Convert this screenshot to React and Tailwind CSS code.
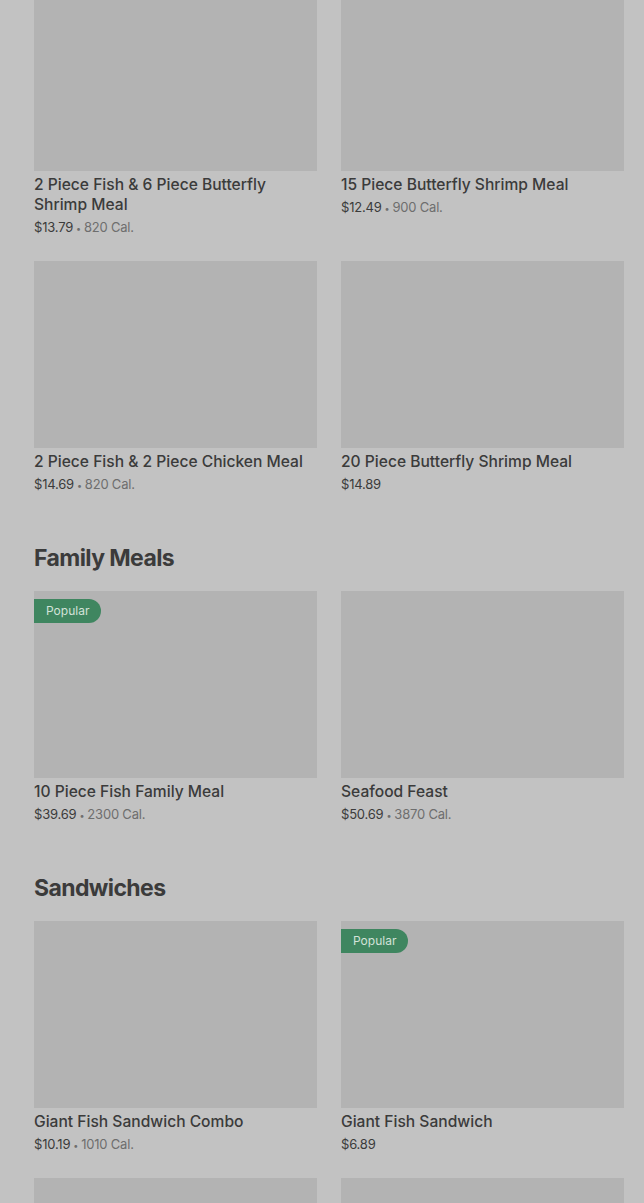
import React from "react";

const sections = [
  {
    title: null,
    items: [
      { name: "2 Piece Fish & 6 Piece Butterfly Shrimp Meal", price: "$13.79", cal: "820 Cal." },
      { name: "15 Piece Butterfly Shrimp Meal", price: "$12.49", cal: "900 Cal." },
      { name: "2 Piece Fish & 2 Piece Chicken Meal", price: "$14.69", cal: "820 Cal." },
      { name: "20 Piece Butterfly Shrimp Meal", price: "$14.89" },
    ],
  },
  {
    title: "Family Meals",
    items: [
      { name: "10 Piece Fish Family Meal", price: "$39.69", cal: "2300 Cal.", popular: true },
      { name: "Seafood Feast", price: "$50.69", cal: "3870 Cal." },
    ],
  },
  {
    title: "Sandwiches",
    items: [
      { name: "Giant Fish Sandwich Combo", price: "$10.19", cal: "1010 Cal." },
      { name: "Giant Fish Sandwich", price: "$6.89", popular: true },
      { name: "", price: "" },
      { name: "", price: "" },
    ],
  },
];

const ItemCard = ({ item }) => (
  <div>
    <div className="relative h-[187px] bg-[#b3b3b3]">
      {item.popular && (
        <span className="absolute left-0 top-2 h-6 flex items-center pl-3 pr-3 rounded-r-full bg-[#3f8660] text-[12px] text-[#d3e2d9]">
          Popular
        </span>
      )}
    </div>
    {item.name && (
      <>
        <div className="mt-1 text-[15.6px] leading-5 font-medium text-[#3b3b3b]">
          {item.name}
        </div>
        <div className="mt-[3px] h-5 flex items-center text-[13px] tracking-[-0.2px] text-[#3b3b3b]">
          <span>{item.price}</span>
          {item.cal && (
            <>
              <span className="mx-[3px] text-[9px] leading-none text-[#6e6e6e]">•</span>
              <span className="text-[#6e6e6e]">{item.cal}</span>
            </>
          )}
        </div>
      </>
    )}
  </div>
);

export default function App() {
  return (
    <div
      className="min-h-[1203px] h-[1203px] overflow-hidden bg-[#c2c2c2] pl-[34px] pr-[20px]"
      style={{ fontFamily: "Inter, 'Liberation Sans', sans-serif" }}
    >
      <div className="-mt-[16px]">
        {sections.map((section, i) => (
          <div key={i} className={section.title ? "mt-[47px]" : ""}>
            {section.title && (
              <h2 className="mb-[17px] text-[23px] leading-8 font-bold tracking-[-0.6px] text-[#3b3b3b]">
                {section.title}
              </h2>
            )}
            <div className="grid grid-cols-2 gap-x-6 gap-y-[23px]">
              {section.items.map((item, j) => (
                <ItemCard key={j} item={item} />
              ))}
            </div>
          </div>
        ))}
      </div>
    </div>
  );
}
